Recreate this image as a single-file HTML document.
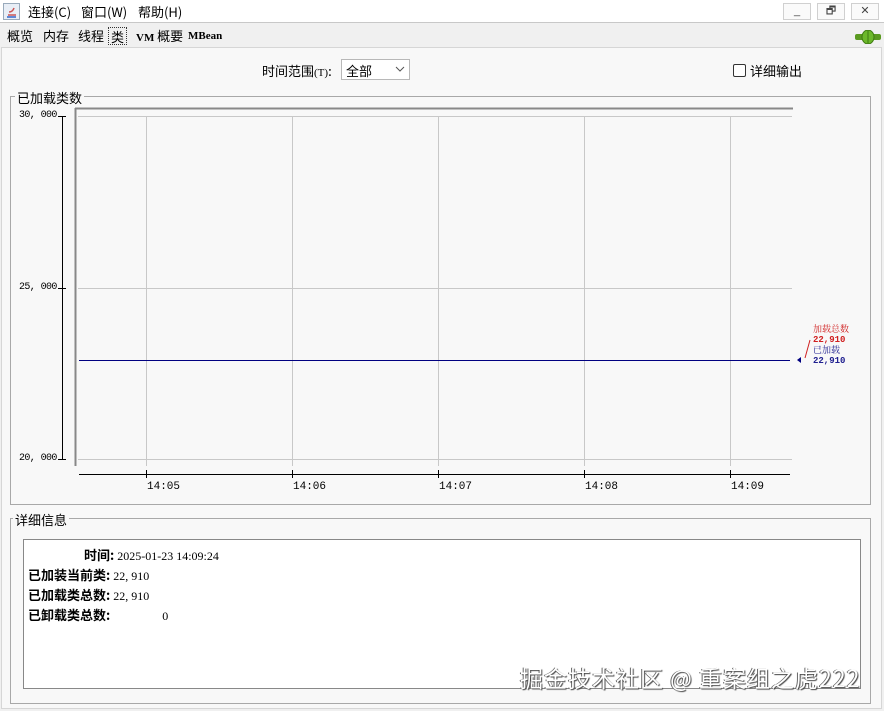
<!DOCTYPE html>
<html><head><meta charset="utf-8"><style>
*{margin:0;padding:0;box-sizing:border-box}
body{width:884px;height:711px;background:#f0f0f0;font-family:"Liberation Sans","Noto Sans CJK SC",sans-serif;font-size:12px;color:#000;position:relative;overflow:hidden}
.a{position:absolute}
.cjk{font-family:"Noto Sans CJK SC",sans-serif}
.serif{font-family:"Liberation Serif","Noto Serif CJK SC",serif}
.mono{font-family:"Liberation Mono","Noto Sans CJK SC",monospace}
.btn{position:absolute;top:3px;width:28px;height:17px;border:1px solid #d0d0d0;background:#fafafa;text-align:center;font-size:11px;line-height:15px;color:#444}
.tab{position:absolute;top:26px;height:20px;line-height:20px;font-size:13px}
.lab{font-family:"Noto Sans CJK SC",sans-serif;font-weight:bold;font-size:13px}
.yl{font-size:10px;letter-spacing:-0.6px}
</style></head><body>
<div class="a" style="left:0;top:0;width:884px;height:23px;background:#fff;border-bottom:1px solid #c8c8c8"></div>
<svg class="a" style="left:3px;top:3px" width="17" height="17"><rect x="0.5" y="0.5" width="16" height="16" fill="#e8eef6" stroke="#9ab"/><path d="M5 12h8M6 9c2 0 4-1 5-4" stroke="#c55" stroke-width="1.5" fill="none"/><path d="M4 14h9" stroke="#36c" stroke-width="1.5"/></svg>
<div class="a cjk" style="left:28px;top:2px;font-size:13px">连接(C)</div>
<div class="a cjk" style="left:81px;top:2px;font-size:13px">窗口(W)</div>
<div class="a cjk" style="left:138px;top:2px;font-size:13px">帮助(H)</div>
<div class="btn" style="left:783px">_</div>
<div class="btn" style="left:817px">🗗</div>
<div class="btn" style="left:851px">✕</div>
<div class="a" style="left:0;top:24px;width:884px;height:23px;background:#f0f0f0"></div>
<div class="tab cjk" style="left:7px">概览</div>
<div class="tab cjk" style="left:43px">内存</div>
<div class="tab cjk" style="left:78px">线程</div>
<div class="tab cjk" style="left:108px;top:27px;height:18px;line-height:17px;border:1px dotted #333;padding:0 2px">类</div>
<div class="tab serif" style="left:136px;font-size:11px;font-weight:bold">VM <span class="cjk" style="font-size:13px;font-weight:normal">概要</span></div>
<div class="tab serif" style="left:188px;font-size:11px;font-weight:bold">MBean</div>
<svg class="a" style="left:855px;top:30px" width="26" height="14"><rect x="0" y="4" width="26" height="6" rx="2" fill="#5a9a20"/><ellipse cx="13" cy="7" rx="6" ry="7" fill="#6cb82a" stroke="#3d7a10"/><line x1="13" y1="0" x2="13" y2="14" stroke="#3d7a10"/></svg>
<div class="a" style="left:1px;top:47px;width:881px;height:662px;background:#f8f8f8;border:1px solid #d6d6d6"></div>
<div class="a cjk" style="left:262px;top:61px;font-size:13px">时间范围<span class="serif" style="font-size:11px">(T)</span>:</div>
<div class="a" style="left:341px;top:59px;width:69px;height:21px;background:#fff;border:1px solid #b8b8b8"></div>
<div class="a cjk" style="left:346px;top:61px;font-size:13px">全部</div>
<svg class="a" style="left:395px;top:66px" width="10" height="6"><path d="M1 1l4 4 4-4" stroke="#555" fill="none"/></svg>
<div class="a" style="left:733px;top:64px;width:13px;height:13px;border:1px solid #333;border-radius:2px;background:#fff"></div>
<div class="a cjk" style="left:750px;top:61px;font-size:13px">详细输出</div>
<div class="a" style="left:10px;top:96px;width:861px;height:409px;border:1px solid #a8a8a8"></div>
<div class="a cjk" style="left:15px;top:88px;font-size:13px;background:#f8f8f8;padding:0 2px">已加载类数</div>
<svg class="a" style="left:0;top:100px" width="884" height="400">
<g stroke="#c8c8c8" stroke-width="1">
<line x1="146.5" y1="16" x2="146.5" y2="366"/><line x1="292.5" y1="16" x2="292.5" y2="366"/><line x1="438.5" y1="16" x2="438.5" y2="366"/><line x1="584.5" y1="16" x2="584.5" y2="366"/><line x1="730.5" y1="16" x2="730.5" y2="366"/>
<line x1="78" y1="16.5" x2="792" y2="16.5"/><line x1="78" y1="188.5" x2="792" y2="188.5"/><line x1="78" y1="359.5" x2="792" y2="359.5"/>
</g>
<line x1="75.5" y1="8" x2="75.5" y2="366" stroke="#888" stroke-width="2"/>
<line x1="75" y1="8.5" x2="793" y2="8.5" stroke="#888" stroke-width="2"/>
<line x1="62.5" y1="16" x2="62.5" y2="360" stroke="#000"/>
<g stroke="#000"><line x1="58" y1="16.5" x2="66" y2="16.5"/><line x1="58" y1="188.5" x2="66" y2="188.5"/><line x1="58" y1="359.5" x2="66" y2="359.5"/></g>
<line x1="79" y1="374.5" x2="790" y2="374.5" stroke="#000"/>
<g stroke="#000"><line x1="146.5" y1="370" x2="146.5" y2="378"/><line x1="292.5" y1="370" x2="292.5" y2="378"/><line x1="438.5" y1="370" x2="438.5" y2="378"/><line x1="584.5" y1="370" x2="584.5" y2="378"/><line x1="730.5" y1="370" x2="730.5" y2="378"/></g>
<line x1="79" y1="260.5" x2="790" y2="260.5" stroke="#000080"/>
<path d="M797 260l4-3v6z" fill="#000080"/>
<line x1="805" y1="258" x2="810" y2="240" stroke="#d02020"/>
</svg>
<div class="a mono yl" style="left:19px;top:110px">30, 000</div>
<div class="a mono yl" style="left:19px;top:282px">25, 000</div>
<div class="a mono yl" style="left:19px;top:453px">20, 000</div>
<div class="a mono" style="left:147px;top:481px;font-size:11px">14:05</div>
<div class="a mono" style="left:293px;top:481px;font-size:11px">14:06</div>
<div class="a mono" style="left:439px;top:481px;font-size:11px">14:07</div>
<div class="a mono" style="left:585px;top:481px;font-size:11px">14:08</div>
<div class="a mono" style="left:731px;top:481px;font-size:11px">14:09</div>
<div class="a serif" style="left:813px;top:324px;font-size:9px;color:#d02020;line-height:10px">加载总数<br><b class="mono">22,910</b></div>
<div class="a serif" style="left:813px;top:345px;font-size:9px;color:#202090;line-height:10px">已加载<br><b class="mono">22,910</b></div>
<div class="a" style="left:10px;top:518px;width:861px;height:186px;border:1px solid #a8a8a8"></div>
<div class="a cjk" style="left:13px;top:510px;font-size:13px;background:#f8f8f8;padding:0 2px">详细信息</div>
<div class="a" style="left:23px;top:539px;width:838px;height:150px;background:#fff;border:1px solid #888"></div>
<div class="a serif" style="left:84px;top:545px;font-size:12px"><span class="lab">时间:</span> 2025-01-23 14:09:24</div>
<div class="a serif" style="left:28px;top:565px;font-size:12px"><span class="lab">已加装当前类:</span> 22, 910</div>
<div class="a serif" style="left:28px;top:585px;font-size:12px"><span class="lab">已加载类总数:</span> 22, 910</div>
<div class="a serif" style="left:28px;top:605px;font-size:12px"><span class="lab">已卸载类总数:</span><span style="margin-left:52px">0</span></div>
<div class="a cjk" style="left:520px;top:660px;font-size:23px;color:#fff;text-shadow:1px 1px 1px #444,-1px 0 #666;letter-spacing:1px">掘金技术社区 @ 重案组之虎222</div>
</body></html>
